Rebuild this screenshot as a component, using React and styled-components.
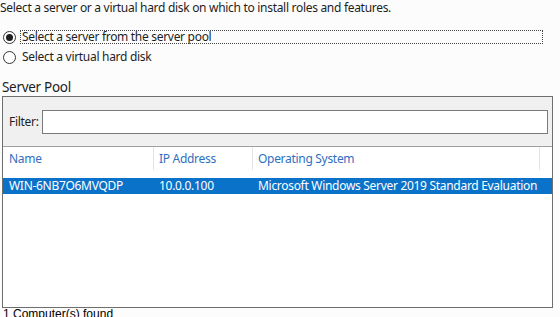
import React from "react";
import styled, { createGlobalStyle } from "styled-components";

const Global = createGlobalStyle`
  html, body { margin: 0; padding: 0; background: #fcfcfc; }
  body { font-family: "Noto Sans", "Segoe UI", sans-serif; font-size: 12px; letter-spacing: -0.3px; color: #1e1e1e; }
  * { box-sizing: border-box; }
`;

const Page = styled.div`
  width: 560px;
  height: 317px;
  overflow: hidden;
  display: flex;
  flex-direction: column;
  & > * { flex: none; }
`;

const Intro = styled.div`
  line-height: 16px;
  height: 16px;
  white-space: nowrap;
`;

const RadioGroup = styled.div`
  margin-top: 14px;
  display: flex;
  flex-direction: column;
  gap: 6px;
`;

const RadioRow = styled.div`
  display: flex;
  align-items: center;
  height: 14px;
  padding-left: 3px;
  padding-right: 17px;
`;

const RadioCircle = styled.span`
  width: 13px;
  height: 13px;
  border-radius: 50%;
  border: 1px solid #333;
  background: #fff;
  display: flex;
  align-items: center;
  justify-content: center;
  flex: none;
  &::after {
    content: "";
    display: ${(p) => (p.$checked ? "block" : "none")};
    width: 7px;
    height: 7px;
    border-radius: 50%;
    background: #1e1e1e;
  }
`;

const RadioLabel = styled.span`
  margin-left: 4px;
  flex: ${(p) => (p.$focused ? 1 : "none")};
  height: 14px;
  line-height: 12px;
  padding: 0 1px;
  border: 1px dotted ${(p) => (p.$focused ? "#444" : "transparent")};
  white-space: nowrap;
`;

const SectionLabel = styled.div`
  margin-top: 14px;
  height: 18px;
  line-height: 18px;
  font-size: 13.5px;
  letter-spacing: -0.3px;
  padding-left: 2px;
  color: #1e1e1e;
`;

const Panel = styled.div`
  margin-left: 2px;
  width: 551px;
  height: 212px;
  border: 1px solid #6e6e6e;
  display: flex;
  flex-direction: column;
  background: #fff;
`;

const FilterBar = styled.div`
  height: 50px;
  flex: none;
  background: #f0f0f0;
  border-bottom: 1px solid #a0a0a0;
  display: flex;
  align-items: center;
  padding: 0 4px 0 6px;
  gap: 3px;
`;

const FilterLabel = styled.span`
  white-space: nowrap;
`;

const FilterInput = styled.div`
  flex: 1;
  height: 24px;
  border: 1px solid #7a7a7a;
  background: #fff;
`;

const HeaderRow = styled.div`
  display: flex;
  flex: none;
  height: 23px;
  align-items: stretch;
`;

const HeaderCell = styled.div`
  width: ${(p) => p.$w}px;
  flex: none;
  display: flex;
  align-items: center;
  padding-left: ${(p) => p.$pad}px;
  color: #2f6fbf;
  border-right: 1px solid #e5e5e5;
  white-space: nowrap;
`;

const HeaderFill = styled.div`
  flex: 1;
`;

const Body = styled.div`
  flex: 1;
  padding-top: 8px;
`;

const Row = styled.div`
  display: flex;
  height: 16px;
  align-items: center;
  background: ${(p) => (p.$selected ? "#0a72c9" : "transparent")};
  color: ${(p) => (p.$selected ? "#fff" : "#1e1e1e")};
`;

const Cell = styled.div`
  width: ${(p) => p.$w}px;
  flex: none;
  padding-left: ${(p) => p.$pad}px;
  white-space: nowrap;
  line-height: 16px;
`;

const Status = styled.div`
  font-family: "Liberation Sans", Arial, sans-serif;
  font-size: 12px;
  letter-spacing: 0;
  line-height: 11px;
  padding-left: 3px;
  margin-top: 1px;
  color: #000;
`;

const cols = [
  { key: "name", label: "Name", w: 151, pad: 6 },
  { key: "ip", label: "IP Address", w: 99, pad: 5 },
  { key: "os", label: "Operating System", w: 287, pad: 5 },
];

const rows = [
  { name: "WIN-6NB7O6MVQDP", ip: "10.0.0.100", os: "Microsoft Windows Server 2019 Standard Evaluation" },
];

export default function App() {
  return (
    <>
      <Global />
      <Page>
        <Intro>Select a server or a virtual hard disk on which to install roles and features.</Intro>
        <RadioGroup>
          <RadioRow>
            <RadioCircle $checked />
            <RadioLabel $focused>Select a server from the server pool</RadioLabel>
          </RadioRow>
          <RadioRow>
            <RadioCircle />
            <RadioLabel>Select a virtual hard disk</RadioLabel>
          </RadioRow>
        </RadioGroup>
        <SectionLabel>Server Pool</SectionLabel>
        <Panel>
          <FilterBar>
            <FilterLabel>Filter:</FilterLabel>
            <FilterInput />
          </FilterBar>
          <HeaderRow>
            {cols.map((c) => (
              <HeaderCell key={c.key} $w={c.w} $pad={c.pad}>{c.label}</HeaderCell>
            ))}
            <HeaderFill />
          </HeaderRow>
          <Body>
            {rows.map((r) => (
              <Row key={r.name} $selected>
                {cols.map((c) => (
                  <Cell key={c.key} $w={c.w} $pad={c.pad}>{r[c.key]}</Cell>
                ))}
              </Row>
            ))}
          </Body>
        </Panel>
        <Status>1 Computer(s) found</Status>
      </Page>
    </>
  );
}
